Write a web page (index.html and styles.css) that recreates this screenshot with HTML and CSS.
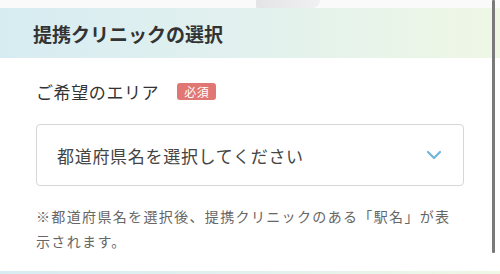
FILE: index.html
```html
<!DOCTYPE html>
<html lang="ja">
<head>
<meta charset="utf-8">
<link rel="stylesheet" href="styles.css">
</head>
<body>
<div class="page">
  <div class="topstrip"><span class="blob"></span></div>
  <div class="band"><h2 class="band-title">提携クリニックの選択</h2></div>
  <div class="content">
    <div class="label-row">
      <span class="label">ご希望のエリア</span>
      <span class="badge">必須</span>
    </div>
    <div class="select">
      <span class="select-text">都道府県名を選択してください</span>
      <svg class="chev" width="16" height="10" viewBox="0 0 16 10"><path d="M2 2 L8 8 L14 2" fill="none" stroke="#72b4dd" stroke-width="2.2" stroke-linecap="round" stroke-linejoin="round"/></svg>
    </div>
    <p class="note">※都道府県名を選択後、提携クリニックのある「駅名」が表示されます。</p>
  </div>
  <div class="band band-next"></div>
  <div class="scrollbar"></div>
</div>
</body>
</html>
```

FILE: styles.css
```css
html, body {
  margin: 0;
  padding: 0;
  background: #fff;
}
.page {
  position: relative;
  width: 500px;
  height: 274px;
  overflow: hidden;
  font-family: "Noto Sans CJK JP", "Noto Sans", sans-serif;
  color: #333;
}
.topstrip {
  height: 8px;
  background: #fafafb;
  position: relative;
}
.blob {
  position: absolute;
  left: 256px;
  top: 0;
  width: 64px;
  height: 8px;
  background: linear-gradient(90deg, #e4e4e6, #f0f0f2);
  border-radius: 0 0 10px 2px;
}
.band {
  height: 50px;
  background: linear-gradient(90deg, #d7ecf2 0%, #e2f1ee 50%, #eff7e5 100%);
  display: flex;
  align-items: center;
  padding-left: 33px;
}
.band-title {
  margin: 0;
  font-size: 19px;
  font-weight: 700;
  color: #333;
  letter-spacing: 0;
  line-height: 1;
}
.content {
  padding: 21px 36px 0 36px;
  height: 192px;
  box-sizing: border-box;
}
.label-row {
  display: flex;
  align-items: center;
  height: 24px;
}
.label {
  font-size: 17px;
  letter-spacing: 0.6px;
  color: #333;
}
.badge {
  margin-left: 18px;
  background: #e07774;
  color: #fff;
  font-size: 12px;
  line-height: 17px;
  height: 17px;
  padding: 0 7px;
  border-radius: 3px;
  letter-spacing: 0.5px;
}
.select {
  margin-top: 21px;
  width: 428px;
  height: 62px;
  box-sizing: border-box;
  border: 1px solid #d6d6d6;
  border-radius: 4px;
  display: flex;
  align-items: center;
  justify-content: space-between;
  padding: 0 20px 0 20px;
}
.select-text {
  font-size: 17px;
  letter-spacing: 0.7px;
  color: #444;
}
.chev {
  display: block;
  margin-right: 1px;
}
.note {
  margin: 18px 0 0 0;
  font-size: 14px;
  line-height: 25px;
  letter-spacing: 1.35px;
  color: #666;
  width: 428px;
}
.band-next {
  height: 3px;
  margin-top: 21px;
}
.scrollbar {
  position: absolute;
  left: 492px;
  top: 0;
  width: 3px;
  height: 253px;
  background: #7a7a7a;
  border-radius: 1px;
}
```
